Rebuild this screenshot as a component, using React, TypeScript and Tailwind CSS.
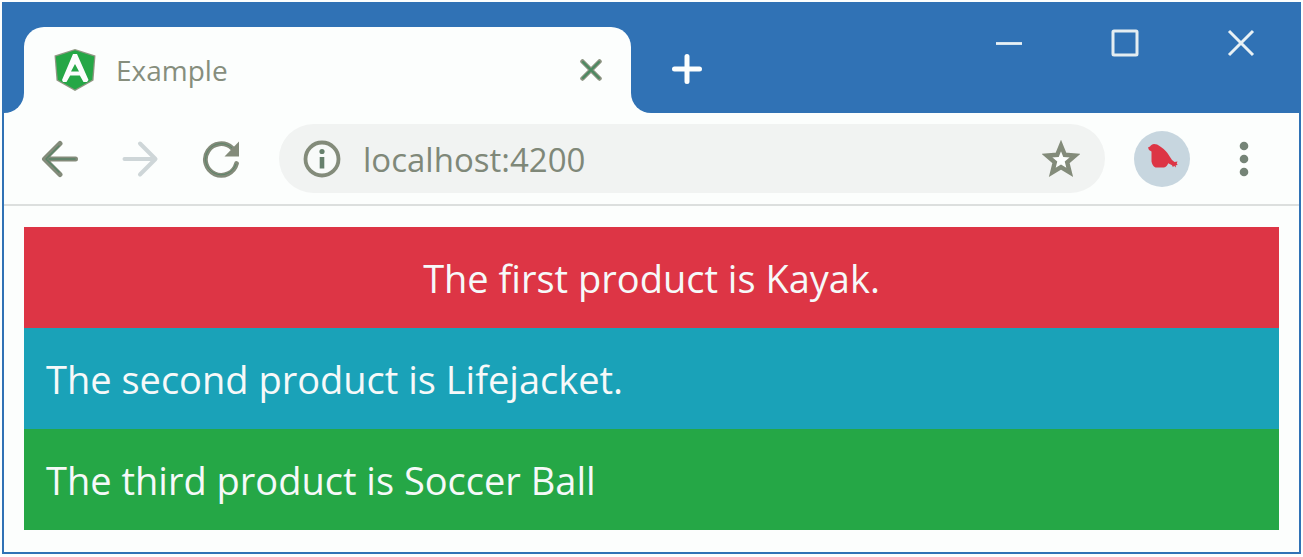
import React from "react";

const rows = [
  { text: "The first product is Kayak.", style: "bg-[#dd3545] text-center" },
  { text: "The second product is Lifejacket.", style: "bg-[#1aa2b8]" },
  { text: "The third product is Soccer Ball", style: "bg-[#25a746]" },
];

function AngularLogo() {
  return (
    <svg width="42" height="42" viewBox="0 0 42 42" aria-hidden="true" className="shrink-0">
      <path d="M21 0 41.500 6.500 39.500 31.500 21 42 2.500 31.500.5 6.500Z" fill="#8f9782" />
      <path d="M21 1.200 40.200 7.500 38.200 30.800 21 40.600 3.800 30.800 1.800 7.500Z" fill="#25a746" />
      <path d="M19 5h4L34.500 31 33 33h-3.500l-3.700-6.500h-9.600L12.500 33H9L8 31ZM21 15l-4 7.500h8Z" fill="#fcfdfd" fillRule="evenodd" />
    </svg>
  );
}

function TabStrip() {
  return (
    <header className="flex h-[109px] bg-[#3072b5]">
      <div className="h-5 w-5 shrink-0 self-end bg-[#fcfefd]">
        <div className="h-full rounded-br-[20px] bg-[#3072b5]" />
      </div>
      <div className="flex h-[86px] w-[607px] items-center self-end rounded-t-[20px] bg-[#fcfefd] pl-[30px] pr-6">
        <AngularLogo />
        <span className="ml-5 flex-1 text-[28px] leading-10 font-medium text-[#868e7d]">Example</span>
        <button type="button" aria-label="Close tab" className="flex h-8 w-8 items-center justify-center">
          <svg width="22" height="22" viewBox="0 0 22 22" fill="none" strokeLinecap="round">
            <path d="m2.500 2.500 17 17m0-17-17 17" stroke="#8a917f" strokeWidth="4.500" />
            <path d="m3 3 16 16m0-16L3 19" stroke="#4a8a60" strokeWidth="2" />
          </svg>
        </button>
      </div>
      <div className="h-5 w-5 shrink-0 self-end bg-[#fcfefd]">
        <div className="h-full rounded-bl-[20px] bg-[#3072b5]" />
      </div>
      <button type="button" aria-label="New tab" className="mb-6 ml-4 flex h-10 w-10 shrink-0 items-center justify-center self-end">
        <svg width="30" height="30" viewBox="0 0 30 30" stroke="#fcfefd" strokeWidth="5" strokeLinecap="round">
          <path d="M15 2.500v25M2.500 15h25" />
        </svg>
      </button>
      <div className="ml-auto flex h-[78px]">
        <button type="button" aria-label="Minimize" className="flex w-[116px] items-center justify-center">
          <svg width="28" height="28" viewBox="0 0 28 28" stroke="#e8f1f5" strokeWidth="2.800">
            <path d="M1 14.500h26" />
          </svg>
        </button>
        <button type="button" aria-label="Maximize" className="flex w-[116px] items-center justify-center">
          <svg width="28" height="28" viewBox="0 0 28 28" fill="none" stroke="#e4edf1" strokeWidth="3">
            <rect x="2" y="2" width="24" height="24" rx="1" />
          </svg>
        </button>
        <button type="button" aria-label="Close" className="flex w-[116px] items-center justify-center">
          <svg width="28" height="28" viewBox="0 0 28 28" stroke="#e8f1f5" strokeWidth="3">
            <path d="m2 2 24 24m0-24L2 26" />
          </svg>
        </button>
      </div>
    </header>
  );
}

function Toolbar() {
  return (
    <nav className="flex h-[93px] items-center border-b-2 border-[#dcdfde] pl-9">
      <button type="button" aria-label="Back" className="flex h-10 w-10 items-center justify-center">
        <svg width="38" height="38" viewBox="0 0 38 38" fill="none" strokeLinecap="round" strokeLinejoin="round">
          <path d="M19 3.500 3.500 19 19 34.500M4 19h30.500" stroke="#838b7a" strokeWidth="5" />
          <path d="M18 6 5 19l13 13M8 19h26" stroke="#5a8468" strokeWidth="1.600" />
        </svg>
      </button>
      <button type="button" aria-label="Forward" className="ml-10 flex h-10 w-10 items-center justify-center">
        <svg width="38" height="38" viewBox="0 0 38 38" fill="none" stroke="#ced6d8" strokeWidth="4" strokeLinecap="round" strokeLinejoin="round">
          <path d="m19 3.500 15.500 15.500L19 34.500M34 19H3.500" />
        </svg>
      </button>
      <button type="button" aria-label="Reload" className="ml-[41px] flex h-10 w-10 items-center justify-center">
        <svg width="38" height="38" viewBox="0 0 38 38" fill="none">
          <path d="M34.500 23.500A15.800 15.800 0 1 1 30 8" stroke="#838b7a" strokeWidth="4.800" strokeLinecap="round" />
          <path d="M37 1.500V16.500H22.500Z" fill="#838b7a" />
          <path d="M34 24A15.600 15.600 0 1 1 30 8" stroke="#5a8468" strokeWidth="1" />
        </svg>
      </button>
      <div className="ml-[38px] flex h-[69px] min-w-0 flex-1 items-center rounded-full bg-[#f1f3f2] px-6">
        <svg width="38" height="38" viewBox="0 0 38 38" fill="none" aria-hidden="true" className="shrink-0">
          <circle cx="19" cy="19" r="16.500" fill="#f8faf9" stroke="#838b7a" strokeWidth="3.800" />
          <circle cx="19" cy="11.500" r="2.600" fill="#66806c" />
          <path d="M19 17v11.500" stroke="#66806c" strokeWidth="4.600" />
        </svg>
        <input
          type="text"
          aria-label="Address"
          defaultValue="localhost:4200"
          className="ml-5 h-12 min-w-0 flex-1 bg-transparent pl-[2px] pt-[2px] text-[33px] font-medium text-[#7f8879] outline-none"
        />
        <button type="button" aria-label="Bookmark this page" className="flex h-10 w-10 items-center justify-center">
          <svg width="38" height="38" viewBox="0 0 38 38" fill="#fcfefd" stroke="#838b7a" strokeWidth="4.400">
            <path d="m19 5.500 3.800 9.300 10.200.8-7.800 6.600 2.500 10.100L19 27l-8.700 5.300 2.500-10.100L5 15.600l10.200-.8Z" />
          </svg>
        </button>
      </div>
      <button type="button" aria-label="Profile" className="ml-[29px] flex h-14 w-14 items-center justify-center rounded-full bg-[#c7d6df]">
        <svg width="56" height="56" viewBox="0 0 56 56">
          <path d="M14 16.500 16 15.500C17 14 18.500 13 20 13c2.500 0 4 .8 5.500 2 3 2 5.500 4 7.500 6.500 2 2.600 3.500 5.500 5 7.500l2.500 2 3-.5-.8 2 1 1.500-2 .2.300 2.300-2-1.800-1 1.500-1-2-3.800-2C33.500 34.500 32 36 30 36.500h-8.500C19 35.500 18 33 17.500 30.500V20.500L15 19Z" fill="#dd3545" />
        </svg>
      </button>
      <button type="button" aria-label="Menu" className="ml-[34px] mr-[35px] flex h-10 w-10 shrink-0 items-center justify-center">
        <svg width="10" height="36" viewBox="0 0 10 36" fill="#758477">
          <circle cx="5" cy="5" r="4.300" />
          <circle cx="5" cy="18" r="4.300" />
          <circle cx="5" cy="31" r="4.300" />
        </svg>
      </button>
    </nav>
  );
}

export default function App() {
  return (
    <div className="bg-[#fcfefd] p-[2px] font-['Open_Sans','Noto_Sans',sans-serif]">
      <div className="border-2 border-[#3072b5] bg-[#fcfefd]">
        <TabStrip />
        <Toolbar />
        <main className="px-5 pt-[21px] pb-[22px]">
          {rows.map((row) => (
            <p key={row.text} className={`px-[22px] pt-[21px] pb-[19px] text-[38px] leading-[61px] text-[#f6f9f9] ${row.style}`}>
              {row.text}
            </p>
          ))}
        </main>
      </div>
    </div>
  );
}
